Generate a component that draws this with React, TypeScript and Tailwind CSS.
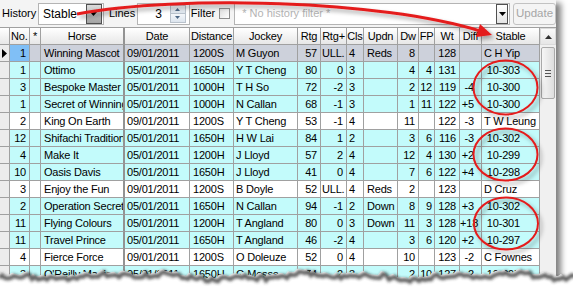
import React from "react";

type Col = { w: number; head: string; cls: string; headCls: string };

const cols: Col[] = [
  { w: 10, head: "", cls: "", headCls: "" },
  { w: 20, head: "No.", cls: "text-right pr-[3px]", headCls: "text-left pl-[1px]" },
  { w: 11, head: "*", cls: "text-center", headCls: "text-center" },
  { w: 84, head: "Horse", cls: "pl-[3px] border-r-2 border-r-[#939393]", headCls: "text-center border-r-2 border-r-[#939393]" },
  { w: 65, head: "Date", cls: "pl-[2px]", headCls: "text-center" },
  { w: 44, head: "Distance", cls: "pl-[3px]", headCls: "text-center" },
  { w: 64, head: "Jockey", cls: "pl-[2px]", headCls: "text-center" },
  { w: 23, head: "Rtg", cls: "text-right pr-[3px]", headCls: "text-center" },
  { w: 26, head: "Rtg+", cls: "text-right pr-[3px]", headCls: "text-center" },
  { w: 17, head: "Cls", cls: "pl-[2px]", headCls: "text-center" },
  { w: 34, head: "Updn", cls: "pl-[3px]", headCls: "text-center" },
  { w: 21, head: "Dw", cls: "text-right pr-[3px]", headCls: "text-center" },
  { w: 16, head: "FP", cls: "text-right pr-[2px]", headCls: "text-center" },
  { w: 25, head: "Wt", cls: "text-right pr-[3px]", headCls: "text-center" },
  { w: 22, head: "Diff", cls: "text-right pr-[7px]", headCls: "text-center" },
  { w: 58, head: "Stable", cls: "pl-[2px]", headCls: "text-center" },
];

const gridCols =
  "grid grid-cols-[10px_20px_11px_84px_65px_44px_64px_23px_26px_17px_34px_21px_16px_25px_22px_58px]";

// kind: s = selected, c = cyan, w = white
const rows: { kind: "s" | "c" | "w"; v: string[] }[] = [
  { kind: "s", v: ["1", "", "Winning Mascot", "09/01/2011", "1200S", "M Guyon", "57", "ULL.", "4", "Reds", "8", "", "128", "", "C H Yip"] },
  { kind: "c", v: ["1", "", "Ottimo", "05/01/2011", "1650H", "Y T Cheng", "80", "0", "3", "", "4", "4", "131", "", " 10-303"] },
  { kind: "c", v: ["3", "", "Bespoke Master", "05/01/2011", "1000H", "T H So", "72", "-2", "3", "", "2", "12", "119", "-4", " 10-300"] },
  { kind: "c", v: ["1", "", "Secret of Winning", "05/01/2011", "1000H", "N Callan", "68", "-1", "3", "", "1", "11", "122", "+5", " 10-300"] },
  { kind: "w", v: ["2", "", "King On Earth", "09/01/2011", "1200S", "Y T Cheng", "53", "-1", "4", "", "11", "", "122", "-3", "T W Leung"] },
  { kind: "c", v: ["12", "", "Shifachi Tradition", "05/01/2011", "1650H", "H W Lai", "84", "1", "2", "", "3", "6", "116", "-3", " 10-302"] },
  { kind: "c", v: ["4", "", "Make It", "05/01/2011", "1200H", "J Lloyd", "57", "2", "4", "", "12", "4", "130", "+2", " 10-299"] },
  { kind: "c", v: ["10", "", "Oasis Davis", "05/01/2011", "1650H", "J Lloyd", "41", "0", "4", "", "7", "6", "122", "+4", " 10-298"] },
  { kind: "w", v: ["3", "", "Enjoy the Fun", "09/01/2011", "1200S", "B Doyle", "52", "ULL.", "4", "Reds", "2", "", "123", "", "D Cruz"] },
  { kind: "c", v: ["2", "", "Operation Secret", "05/01/2011", "1650H", "N Callan", "94", "-1", "2", "Down", "8", "9", "128", "+3", " 10-302"] },
  { kind: "c", v: ["11", "", "Flying Colours", "05/01/2011", "1200H", "T Angland", "80", "0", "3", "Down", "11", "3", "128", "+18", " 10-301"] },
  { kind: "c", v: ["11", "", "Travel Prince", "05/01/2011", "1650H", "T Angland", "46", "-2", "4", "", "3", "6", "120", "+2", " 10-297"] },
  { kind: "w", v: ["4", "", "Fierce Force", "09/01/2011", "1200S", "O Doleuze", "52", "0", "4", "", "10", "", "123", "-2", "C Fownes"] },
  { kind: "c", v: ["3", "", "O'Reilly Magic", "05/01/2011", "1650H", "G Mosse", "74", "-2", "3", "", "2", "10", "127", "-2", " 10-295"] },
];

const rowBg = { s: "bg-[#cdd1db]", c: "bg-[#c3fbfb]", w: "bg-white" };

// torn paper edge along the bottom
const tear: [number, number][] = [];
for (let x = -3; x <= 576; x += 3) {
  const r = Math.sin(x * 12.9898) * 43758.5453;
  const j = r - Math.floor(r);
  const y = 273.5 + 2 * Math.sin(x / 29) + 1.5 * Math.sin(x / 11 + 2) + (j - 0.5) * 5;
  tear.push([x, y]);
}
const tearLine = tear.map(([x, y]) => `${x},${y.toFixed(1)}`).join(" ");
const tearShadow = tear.map(([x, y]) => `${x + 2},${(y + 3).toFixed(1)}`).join(" ");

function DropBtn({ dark }: { dark?: boolean }) {
  return (
    <div
      className={
        dark
          ? "mr-[1px] flex h-[20px] w-[16px] items-center justify-center border border-[#505050] bg-linear-to-b from-[#dcdcdc] to-[#a4a4a4]"
          : "mr-[1px] flex h-[20px] w-[12px] items-center justify-center border border-[#505050] bg-linear-to-b from-white to-[#e4e4e4]"
      }
    >
      <svg width="7" height="4" viewBox="0 0 7 4">
        <path d="M0 0h7L3.5 4z" fill="#000" />
      </svg>
    </div>
  );
}

export default function App() {
  return (
    <div className="relative h-[297px] w-[573px] overflow-hidden bg-white font-['Liberation_Sans',Arial,sans-serif] text-[11px] text-black">
      <div className="flex h-[297px] w-[556px] flex-col bg-[#f4f4f4] shadow-[5px_3px_6px_rgba(0,0,0,0.5)]">
        {/* toolbar */}
        <div className="flex h-[27px] shrink-0 items-center">
          <span className="ml-[2px] w-[36px]">History</span>
          <div className="flex h-[22px] w-[66px] items-center border border-[#b4b4b4] bg-white pl-[4px]">
            <span className="flex-1 text-[12px]">Stable</span>
            <DropBtn dark />
          </div>
          <span className="ml-[5px] w-[28px]">Lines</span>
          <div className="flex h-[22px] w-[53px] items-center border border-[#b4b4b4] bg-white">
            <span className="flex-1 pr-[8px] text-right text-[12px]">3</span>
            <div className="mr-[3px] flex h-[18px] w-[16px] flex-col border border-[#b9c2cc]">
              <div className="flex flex-1 items-center justify-center border-b border-[#b9c2cc] bg-linear-to-b from-[#f4f7fa] to-[#dde5ee]">
                <svg width="5" height="3" viewBox="0 0 5 3"><path d="M0 3h5L2.5 0z" fill="#4d6785" /></svg>
              </div>
              <div className="flex flex-1 items-center justify-center bg-linear-to-b from-[#f4f7fa] to-[#dde5ee]">
                <svg width="5" height="3" viewBox="0 0 5 3"><path d="M0 0h5L2.5 3z" fill="#4d6785" /></svg>
              </div>
            </div>
          </div>
          <span className="ml-[1px]">Filter</span>
          <div className="ml-[4px] h-[11px] w-[11px] border border-[#8e8e8e] bg-linear-to-br from-[#dcdcdc] to-white" />
          <div className="ml-[4px] flex h-[22px] w-[276px] items-center border border-[#b4b4b4] bg-white pl-[7px]">
            <span className="flex-1 text-[#b4b4b4]">* No history filter *</span>
            <DropBtn />
          </div>
          <div className="ml-[3px] flex h-[22px] w-[43px] items-center justify-center rounded-[3px] border border-[#c2c2c2] bg-[#f4f4f4] text-[11.5px] text-[#a6a6a6]">
            Update
          </div>
        </div>

        {/* grid + scrollbar */}
        <div className="flex flex-1 border-t border-[#a0a0a0]">
          <div className="flex w-[540px] flex-col bg-white tracking-[-0.2px]">
            <div className={`${gridCols} h-[17px]`}>
              {cols.map((c, i) => (
                <div
                  key={i}
                  className={`h-[17px] overflow-hidden whitespace-nowrap border-r border-b border-[#a0a0a0] bg-linear-to-b from-white to-[#e7e7e7] leading-[16px] ${c.headCls}`}
                >
                  {c.head}
                </div>
              ))}
            </div>
            {rows.map((r, ri) => (
              <div key={ri} className={`${gridCols} h-[17px]`}>
                <div className="flex h-[17px] items-center border-r border-b border-[#a0a0a0] bg-[#ececec] pl-[2px]">
                  {r.kind === "s" && (
                    <svg width="5" height="9" viewBox="0 0 5 9"><path d="M0 0l5 4.5L0 9z" fill="#000" /></svg>
                  )}
                </div>
                {r.v.map((v, ci) => {
                  const c = cols[ci + 1];
                  let bg = rowBg[r.kind];
                  if (r.kind === "s" && ci === 0) bg = "bg-[#80bff6]";
                  const align = v === "ULL." ? "pl-[1px]" : c.cls;
                  return (
                    <div
                      key={ci}
                      className={`h-[17px] overflow-hidden whitespace-pre border-r border-b border-[#a0a0a0] leading-[16px] ${bg} ${align}`}
                    >
                      {v}
                    </div>
                  );
                })}
              </div>
            ))}
          </div>

          {/* scrollbar */}
          <div className="flex w-[16px] flex-col bg-[#f0f0f0]">
            <div className="flex h-[17px] items-center justify-center border border-[#dadada] bg-linear-to-b from-[#fafafa] to-[#e6e6e6]">
              <svg width="7" height="4" viewBox="0 0 7 4"><path d="M0 4h7L3.5 0z" fill="#303030" /></svg>
            </div>
            <div className="mx-[1px] mt-[2px] flex h-[52px] flex-col items-center justify-center gap-[2px] rounded-[2px] border border-[#a9a9a9] bg-linear-to-r from-[#f6f6f6] to-[#dedede]">
              <div className="h-px w-[6px] bg-[#555]" />
              <div className="h-px w-[6px] bg-[#555]" />
              <div className="h-px w-[6px] bg-[#555]" />
            </div>
          </div>
        </div>
      </div>

      {/* annotations + torn edge */}
      <svg className="pointer-events-none absolute inset-0" width="573" height="297" viewBox="0 0 573 297">
        <defs>
          <filter id="sh" x="-20%" y="-20%" width="140%" height="140%">
            <feDropShadow dx="3" dy="3" stdDeviation="2" floodColor="#000" floodOpacity="0.35" />
          </filter>
          <filter id="blur" x="-5%" y="-50%" width="110%" height="200%">
            <feGaussianBlur stdDeviation="1.6" />
          </filter>
        </defs>
        <g filter="url(#sh)" fill="none" stroke="#e41e1e" strokeWidth="2">
          <ellipse cx="505.5" cy="87.5" rx="32" ry="27" />
          <ellipse cx="505.5" cy="154.5" rx="32" ry="26" />
          <ellipse cx="506" cy="223.5" rx="32" ry="26" />
        </g>
        <g filter="url(#sh)">
          <path d="M77 14 C180 -5 380 0 480 31" fill="none" stroke="#e41e1e" strokeWidth="3" />
          <path d="M492 35 L476 37 L480 24 Z" fill="#e41e1e" />
        </g>
        <polygon points={`${tearLine} 576,297 -3,297`} fill="#fff" />
        <polyline points={tearShadow} fill="none" stroke="#2a2a2a" strokeWidth="4" opacity="0.75" filter="url(#blur)" />
      </svg>
    </div>
  );
}
